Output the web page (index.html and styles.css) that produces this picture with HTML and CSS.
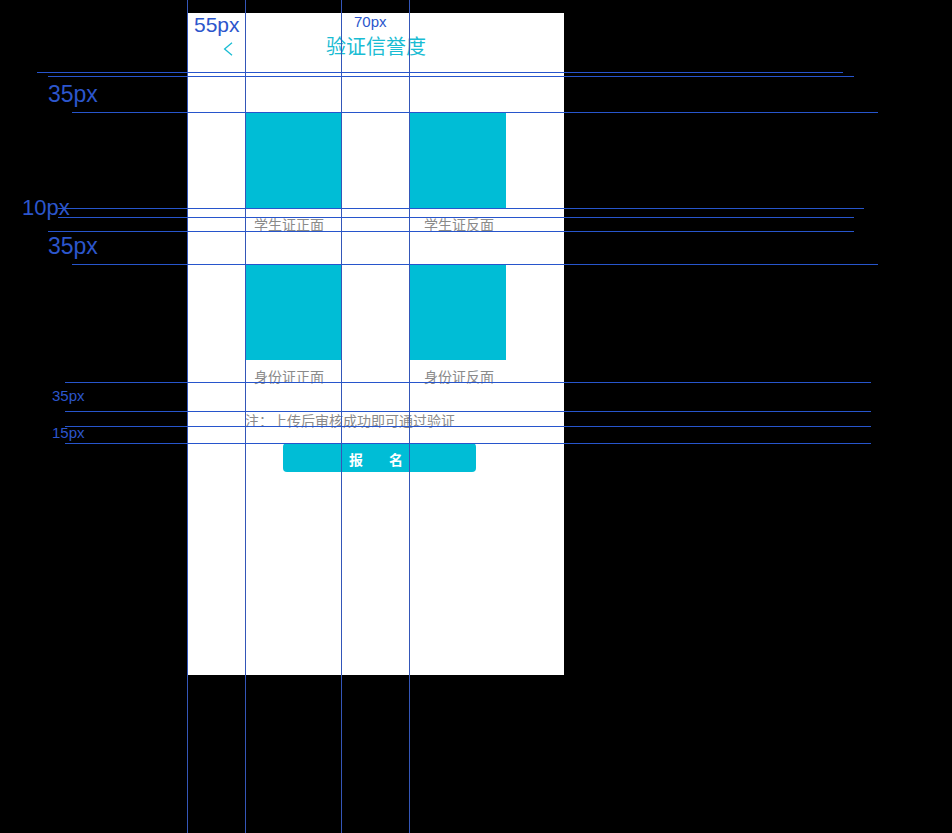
FILE: index.html
```html
<!DOCTYPE html>
<html lang="zh-CN">

<head>
    <meta charset="UTF-8">
    <meta name="viewport" content="width=device-width, initial-scale=1.0">
    <title>验证信誉度</title>
    <link rel="stylesheet" href="styles.css">
</head>

<body>
    <div class="stage">
        <div class="phone">
            <header class="topbar">
                <a class="back" href="#">
                    <svg width="10" height="14" viewBox="0 0 10 14">
                        <polyline points="9,0.8 1.6,7 9,13.2" fill="none" stroke="#19bcd3" stroke-width="1.3"/>
                    </svg>
                </a>
                <h1 class="title">验证信誉度</h1>
            </header>

            <main class="content">
                <div class="cards">
                    <div class="card">
                        <div class="card-img"></div>
                        <p class="card-label">学生证正面</p>
                    </div>
                    <div class="card">
                        <div class="card-img"></div>
                        <p class="card-label">学生证反面</p>
                    </div>
                    <div class="card">
                        <div class="card-img"></div>
                        <p class="card-label">身份证正面</p>
                    </div>
                    <div class="card">
                        <div class="card-img"></div>
                        <p class="card-label">身份证反面</p>
                    </div>
                </div>

                <p class="note">注：上传后审核成功即可通过验证</p>

                <button class="submit" type="button"><span>报</span><span>名</span></button>
            </main>
        </div>

        <!-- 标注线 -->
        <div class="guides">
            <div class="v-line v1"></div>
            <div class="v-line v2"></div>
            <div class="v-line v3"></div>
            <div class="v-line v4"></div>

            <div class="h-line h1"></div>
            <div class="h-line h2"></div>
            <div class="h-line h3"></div>
            <div class="h-line h4"></div>
            <div class="h-line h5"></div>
            <div class="h-line h6"></div>
            <div class="h-line h7"></div>
            <div class="h-line h8"></div>
            <div class="h-line h9"></div>
            <div class="h-line h10"></div>
            <div class="h-line h11"></div>

            <span class="mark m-55">55px</span>
            <span class="mark m-70">70px</span>
            <span class="mark m-35a">35px</span>
            <span class="mark m-10">10px</span>
            <span class="mark m-35b">35px</span>
            <span class="mark m-35c">35px</span>
            <span class="mark m-15">15px</span>
        </div>
    </div>
</body>

</html>
```

FILE: styles.css
```css
body {
    margin: 0;
    background-color: #000;
    font-family: "Noto Sans CJK SC", sans-serif;
}

.stage {
    position: relative;
    width: 952px;
    height: 833px;
    padding: 13px 0 0 188px;
    box-sizing: border-box;
    overflow: hidden;
}

.phone {
    width: 376px;
    height: 662px;
    background-color: #fff;
}

/* 顶部导航 */
.topbar {
    display: grid;
    grid-template-columns: 57px 1fr 57px;
    align-items: start;
    height: 59px;
    padding-top: 19px;
    box-sizing: border-box;
}

.back {
    justify-self: end;
    margin-right: 12px;
    margin-top: 10px;
    display: block;
    line-height: 0;
}

.title {
    margin: 0;
    font-size: 20px;
    line-height: 28px;
    font-weight: normal;
    color: #19bcd3;
    text-align: center;
}

/* 上传区域 */
.content {
    padding-top: 40px;
}

.cards {
    display: grid;
    grid-template-columns: 96px 96px;
    column-gap: 69px;
    row-gap: 30px;
    padding-left: 57px;
}

.card-img {
    width: 96px;
    height: 96px;
    background-color: #00bdd6;
}

.card-label {
    margin: 6px 0 0;
    padding-left: 9px;
    font-size: 14px;
    line-height: 20px;
    color: #8a8a8a;
    white-space: nowrap;
}

.card:nth-child(2n) .card-label {
    padding-left: 14px;
}

.note {
    margin: 24px 0 0;
    padding-left: 57px;
    font-size: 14px;
    line-height: 20px;
    color: #8a8a8a;
}

.submit {
    display: flex;
    justify-content: center;
    gap: 26px;
    width: 193px;
    height: 29px;
    margin: 13px 0 0 95px;
    padding: 3px 7px 0 0;
    box-sizing: border-box;
    border: none;
    border-radius: 4px;
    background-color: #00bdd6;
    color: #fff;
    font-family: "Noto Sans CJK SC", sans-serif;
    font-size: 14px;
    font-weight: bold;
    line-height: 26px;
    cursor: pointer;
}

/* 标注 */
.guides {
    position: absolute;
    top: 0;
    left: 0;
    width: 952px;
    height: 833px;
    pointer-events: none;
}

.v-line {
    position: absolute;
    top: 0;
    width: 1px;
    height: 833px;
    background-color: #3456b8;
}

.v1 { left: 187px; }
.v2 { left: 245px; }
.v3 { left: 341px; }
.v4 { left: 409px; }

.h-line {
    position: absolute;
    height: 1px;
    background-color: #2755cc;
}

.h1 { top: 72px; left: 37px; width: 806px; }
.h2 { top: 76px; left: 48px; width: 806px; }
.h3 { top: 112px; left: 72px; width: 806px; }
.h4 { top: 208px; left: 58px; width: 806px; }
.h5 { top: 217px; left: 58px; width: 796px; }
.h6 { top: 231px; left: 48px; width: 806px; }
.h7 { top: 264px; left: 72px; width: 806px; }
.h8 { top: 382px; left: 65px; width: 806px; }
.h9 { top: 411px; left: 65px; width: 806px; }
.h10 { top: 426px; left: 65px; width: 806px; }
.h11 { top: 443px; left: 65px; width: 806px; }

.mark {
    position: absolute;
    font-family: "Liberation Sans", Arial, sans-serif;
    line-height: 1;
    color: #2c56cc;
    white-space: nowrap;
}

.m-55 { top: 14px; left: 194px; font-size: 21px; }
.m-70 { top: 14px; left: 354px; font-size: 15px; }
.m-35a { top: 83px; left: 48px; font-size: 23px; }
.m-10 { top: 197px; left: 22px; font-size: 22px; }
.m-35b { top: 235px; left: 48px; font-size: 23px; }
.m-35c { top: 388px; left: 52px; font-size: 15px; }
.m-15 { top: 425px; left: 52px; font-size: 15px; }
```
